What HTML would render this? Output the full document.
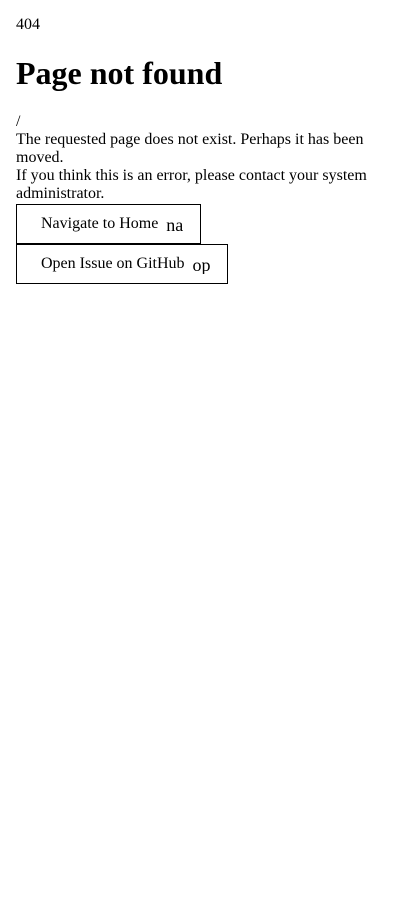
<!DOCTYPE html>
<html><head><style>
html,body{margin:0;background:#fff}
body{padding:16px;font-family:"Liberation Serif",serif;font-size:16px;line-height:18px;color:#000}
h1{font-size:32px;line-height:37px;margin:21px 0;font-weight:bold}
.b{box-sizing:border-box;height:40px;border:1px solid #000;display:flex;align-items:center;padding:0 0 0 24px;width:max-content;white-space:nowrap}
.b .i{font-size:18px;margin-left:8px;display:inline-block;overflow:hidden;width:17px;position:relative;top:1px}
</style></head><body>
<div>404</div>
<h1>Page not found</h1>
<div>/</div>
<div>The requested page does not exist. Perhaps it has been moved.<br>If you think this is an error, please contact your system administrator.</div>
<div class="b" style="margin-top:1px;width:185px">Navigate to Home<span class="i">na</span></div>
<div class="b" style="width:212px;margin-top:0">Open Issue on GitHub<span class="i" style="width:19px">op</span></div>
</body></html>
